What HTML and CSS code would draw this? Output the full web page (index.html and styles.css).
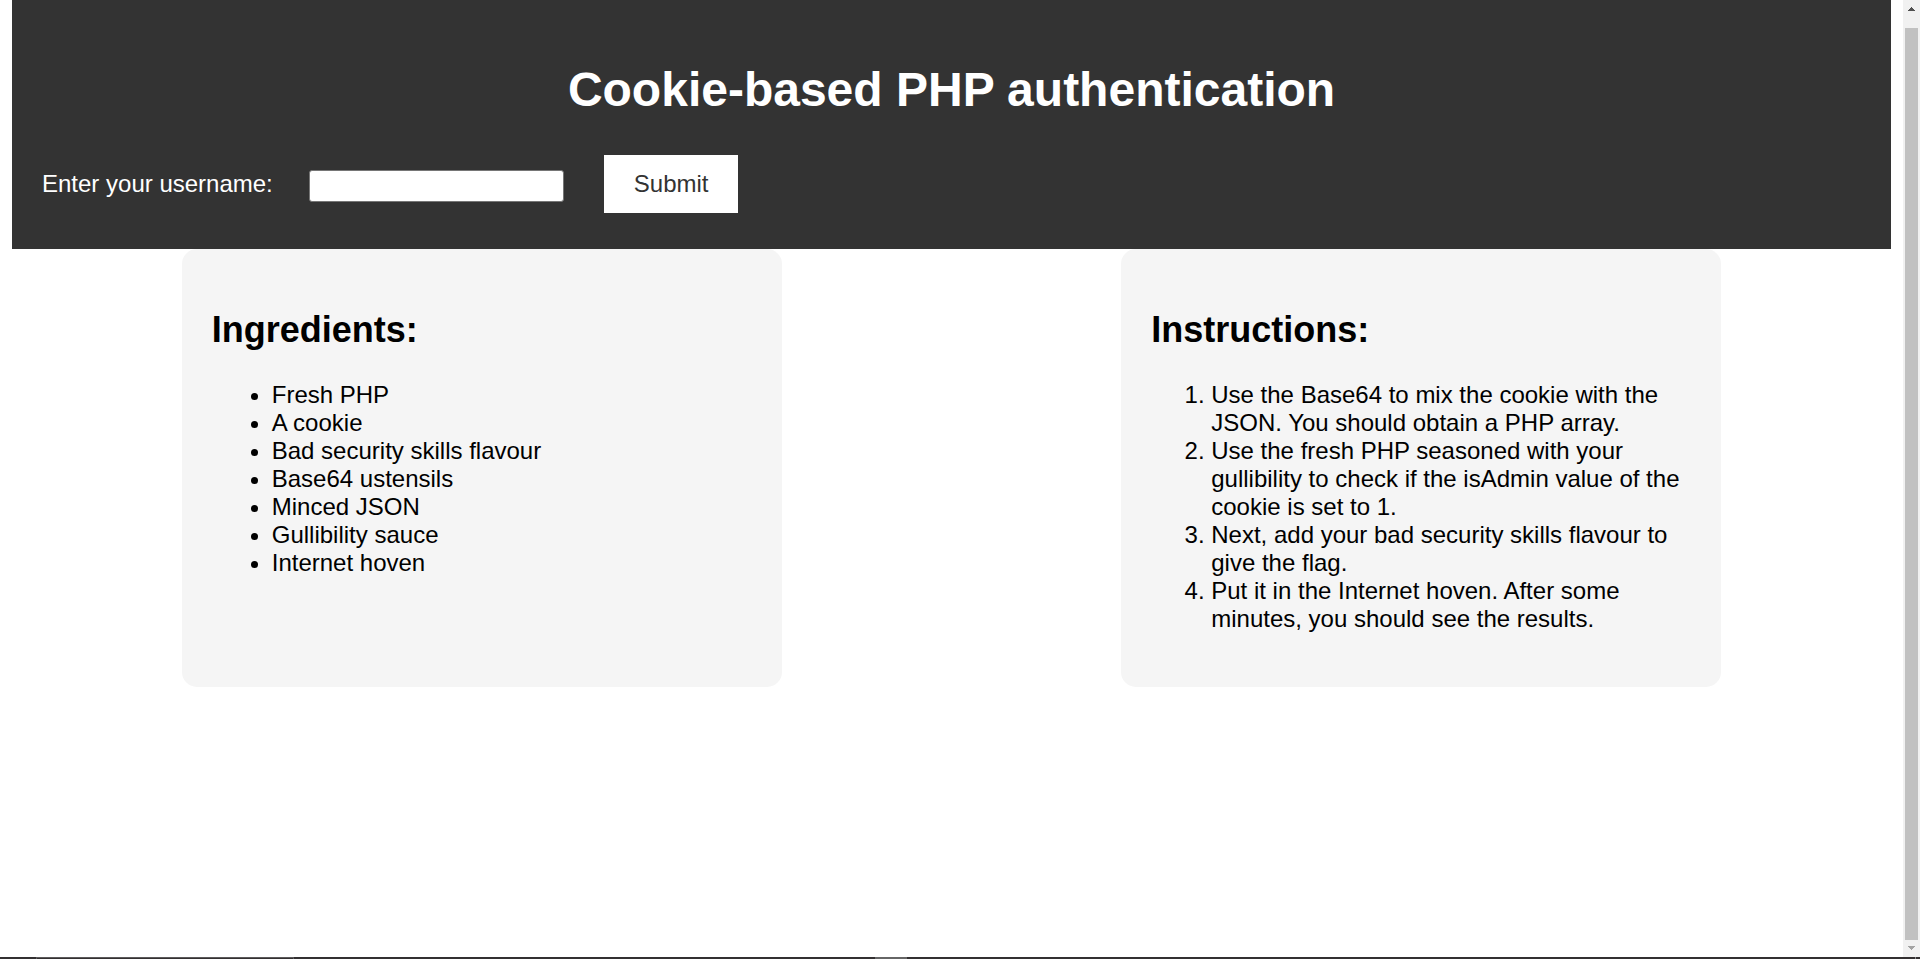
FILE: index.html
```html
<!DOCTYPE html>
<html lang="en">
<head>
<meta charset="utf-8">
<title>Cookie-based PHP authentication</title>
<link rel="stylesheet" href="styles.css">
</head>
<body>
<div class="viewport">
  <div class="page">
    <header class="header">
      <h1 class="title">Cookie-based PHP authentication</h1>
      <form class="login">
        <label class="login-label" for="username">Enter your username:</label>
        <input class="login-input" type="text" id="username" name="username">
        <button class="login-button" type="submit">Submit</button>
      </form>
    </header>
    <main class="recipe">
      <section class="card">
        <h2 class="card-title">Ingredients:</h2>
        <ul class="list">
          <li>Fresh PHP</li>
          <li>A cookie</li>
          <li>Bad security skills flavour</li>
          <li>Base64 ustensils</li>
          <li>Minced JSON</li>
          <li>Gullibility sauce</li>
          <li>Internet hoven</li>
        </ul>
      </section>
      <section class="card">
        <h2 class="card-title">Instructions:</h2>
        <ol class="list">
          <li>Use the Base64 to mix the cookie with the JSON. You should obtain a PHP array.</li>
          <li>Use the fresh PHP seasoned with your gullibility to check if the isAdmin value of the cookie is set to 1.</li>
          <li>Next, add your bad security skills flavour to give the flag.</li>
          <li>Put it in the Internet hoven. After some minutes, you should see the results.</li>
        </ol>
      </section>
    </main>
  </div>
  <div class="scrollbar" aria-hidden="true">
    <svg class="arrow" width="17" height="17" viewBox="0 0 17 17" shape-rendering="crispEdges"><path fill="#505050" d="M8 7h1v1h1v1h1v1h1v1H5v-1h1V9h1V8h1z"/></svg>
    <div class="thumb"></div>
    <svg class="arrow" width="17" height="17" viewBox="0 0 17 17" shape-rendering="crispEdges"><path fill="#a3a3a3" d="M5 6h7v1h-1v1h-1v1H9v1H8V9H7V8H6V7H5z"/></svg>
  </div>
</div>
<div class="taskbar" aria-hidden="true">
  <span class="task-search"></span>
  <span class="task-active"></span>
  <span class="task-edge"></span>
</div>
</body>
</html>
```
FILE: styles.css
```css
* {
  box-sizing: border-box;
}

body {
  display: flex;
  flex-direction: column;
  min-height: 100vh;
  margin: 0;
  background: #fff;
  color: #000;
  font-family: Arial, "Liberation Sans", sans-serif;
  font-size: 24px;
  line-height: 28px;
}

.viewport {
  display: flex;
  flex: 1;
}

.page {
  flex: 1;
  padding: 0 12px;
}

.header {
  padding: 62px 30px 36px;
  background: #333;
  color: #fff;
}

.title {
  margin: 0 0 38px;
  font-size: 48px;
  line-height: 55px;
  text-align: center;
}

.login {
  display: flex;
  align-items: center;
}

.login-label {
  margin-right: 36px;
}

.login-input {
  width: 255px;
  height: 32px;
  margin: 4px 40px 0 0;
  padding: 2px 3px;
  border: 1px solid #767676;
  border-radius: 3px;
  background: #fff;
  font: 20px Arial, "Liberation Sans", sans-serif;
}

.login-button {
  padding: 15px 30px;
  border: 0;
  background: #fff;
  color: #333;
  font: inherit;
}

.recipe {
  display: flex;
  justify-content: space-around;
}

.card {
  width: 600px;
  padding: 30px;
  border-radius: 15px;
  background: #f5f5f5;
}

.card-title {
  margin: 30px 0;
  font-size: 36px;
  line-height: 42px;
}

.list {
  margin: 0 0 24px;
  padding-left: 60px;
}

.scrollbar {
  display: flex;
  flex-direction: column;
  width: 17px;
  background: #f1f1f1;
}

.arrow {
  display: block;
}

.thumb {
  flex: 1;
  margin: 11px 2px 0;
  background: #c1c1c1;
}

.taskbar {
  display: flex;
  height: 2px;
  padding-left: 36px;
  background: #333031;
}

.task-search {
  width: 258px;
  border: 1px solid #5c5a5b;
  border-bottom: 0;
}

.task-active {
  width: 32px;
  margin-left: 581px;
  background: #666;
}

.task-edge {
  width: 1px;
  margin: 0 4px 0 auto;
  background: #8a8a8a;
}
```
